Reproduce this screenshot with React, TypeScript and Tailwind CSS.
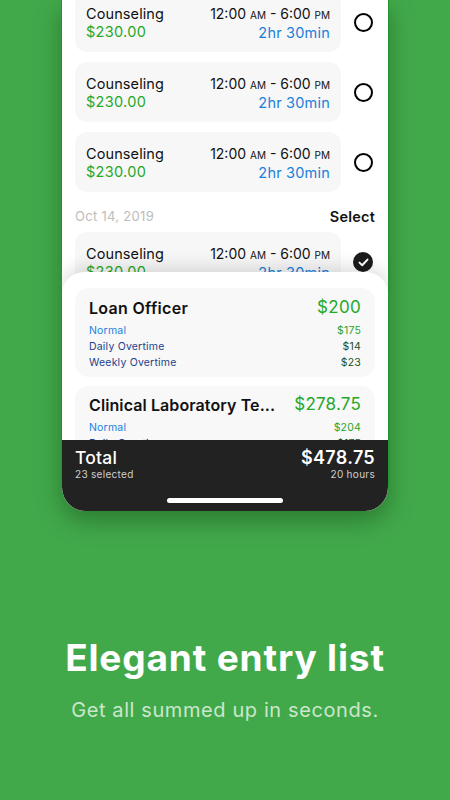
import React from "react";

const font = { fontFamily: "Inter, 'Noto Sans', sans-serif" };

function Circle() {
  return (
    <div className="w-[32px] flex justify-end">
      <div className="w-[19px] h-[19px] rounded-full border-[2.2px] border-black" />
    </div>
  );
}

function Checked() {
  return (
    <div className="w-[32px] flex justify-end">
      <div className="w-[20px] h-[20px] rounded-full bg-[#1c1c1c] flex items-center justify-center">
        <svg width="11" height="9" viewBox="0 0 11 9" fill="none">
          <path d="M1.5 4.6 L4.2 7.2 L9.5 1.6" stroke="white" strokeWidth="2" strokeLinecap="round" strokeLinejoin="round" />
        </svg>
      </div>
    </div>
  );
}

function Entry({ checked }: { checked?: boolean }) {
  return (
    <div className="flex items-center">
      <div className="w-[266px] h-[60px] rounded-[12px] bg-[#f7f7f7] px-[11px] pt-[13px] flex justify-between">
        <div className="flex flex-col">
          <span className="text-[14.5px] leading-[18px] text-[#111] tracking-[0.1px]">Counseling</span>
          <span className="text-[14.5px] leading-[18px] text-[#25a828] tracking-[0.3px]">$230.00</span>
        </div>
        <div className="flex flex-col items-end">
          <span className="text-[14px] leading-[18px] text-[#111] tracking-[0px]">
            12:00 <span className="text-[10px]">AM</span> - 6:00 <span className="text-[10px]">PM</span>
          </span>
          <span className="text-[14.5px] leading-[18px] text-[#1b7fd8] tracking-[0.2px]">2hr 30min</span>
        </div>
      </div>
      {checked ? <Checked /> : <Circle />}
    </div>
  );
}

function Row({ label, value, labelColor, valueColor }: { label: string; value: string; labelColor: string; valueColor: string }) {
  return (
    <div className="flex justify-between text-[10.5px] leading-[16px] tracking-[0.2px]">
      <span className={labelColor}>{label}</span>
      <span className={valueColor}>{value}</span>
    </div>
  );
}

export default function App() {
  return (
    <div style={font} className="w-[450px] h-[800px] bg-[#42a94b] overflow-hidden flex flex-col items-center">
      <div className="relative w-[328px] h-[511px] shrink-0 bg-white rounded-b-[24px] border-x border-[#23952e] shadow-[0_10px_24px_rgba(0,40,0,0.35)] overflow-hidden">
        {/* list */}
        <div className="flex flex-col gap-[10px] pl-[13px] pr-[13px] mt-[-8px]">
          <Entry />
          <Entry />
          <Entry />
          <div className="flex justify-between items-center h-[30px]">
            <span className="text-[13px] text-[#bdbdbd] tracking-[0.3px]">Oct 14, 2019</span>
            <span className="text-[14.5px] font-semibold text-[#111] tracking-[0.2px]">Select</span>
          </div>
          <div className="mt-[-10px]">
            <Entry checked />
          </div>
        </div>

        {/* bottom sheet */}
        <div className="absolute left-0 right-0 top-[272px] bottom-0 bg-white rounded-t-[22px] shadow-[0_-6px_16px_rgba(0,0,0,0.12)] flex flex-col">
          <div className="flex-1 overflow-hidden px-[13px] pt-[16px] flex flex-col gap-[9px]">
            <div className="rounded-[14px] bg-[#f8f8f8] px-[14px] pt-[10px] pb-[6px]">
              <div className="flex justify-between items-center h-[20px] mb-[5px]">
                <span className="text-[16px] font-semibold text-[#111] tracking-[0.3px]">Loan Officer</span>
                <span className="text-[17px] text-[#25a828] tracking-[0.3px]">$200</span>
              </div>
              <Row label="Normal" value="$175" labelColor="text-[#2382dd]" valueColor="text-[#2aa52e]" />
              <Row label="Daily Overtime" value="$14" labelColor="text-[#1d3f8c]" valueColor="text-[#1c4f1c]" />
              <Row label="Weekly Overtime" value="$23" labelColor="text-[#1d3f8c]" valueColor="text-[#1c4f1c]" />
            </div>
            <div className="rounded-[14px] bg-[#f8f8f8] px-[14px] pt-[9px] pb-[8px]">
              <div className="flex justify-between items-center h-[20px] mb-[5px]">
                <span className="text-[16px] font-semibold text-[#111] tracking-[0.1px]">Clinical Laboratory Te...</span>
                <span className="text-[17px] text-[#25a828] tracking-[0.2px]">$278.75</span>
              </div>
              <Row label="Normal" value="$204" labelColor="text-[#2382dd]" valueColor="text-[#2aa52e]" />
              <Row label="Daily Overtime" value="$175" labelColor="text-[#1d3f8c]" valueColor="text-[#1c4f1c]" />
            </div>
          </div>
          <div className="h-[71px] shrink-0 bg-[#222222] px-[13px] pt-[8px] flex flex-col">
            <div className="flex justify-between items-start">
              <div className="flex flex-col">
                <span className="text-[17.5px] leading-[20px] font-medium text-white tracking-[0.2px]">Total</span>
                <span className="text-[10px] leading-[12px] text-[#cfcfcf] tracking-[0.3px]">23 selected</span>
              </div>
              <div className="flex flex-col items-end">
                <span className="text-[18px] leading-[20px] font-semibold text-white tracking-[0.3px]">$478.75</span>
                <span className="text-[10px] leading-[12px] text-[#cfcfcf] tracking-[0.3px]">20 hours</span>
              </div>
            </div>
            <div className="flex justify-center mt-[18px]">
              <div className="w-[116px] h-[5px] rounded-full bg-white" />
            </div>
          </div>
        </div>
      </div>

      <div className="mt-[125px] text-white text-[37px] leading-[44px] font-bold tracking-[0.85px]">Elegant entry list</div>
      <div className="mt-[17px] text-[20px] leading-[26px] text-[#cbe7cb] tracking-[0.6px]">Get all summed up in seconds.</div>
    </div>
  );
}
